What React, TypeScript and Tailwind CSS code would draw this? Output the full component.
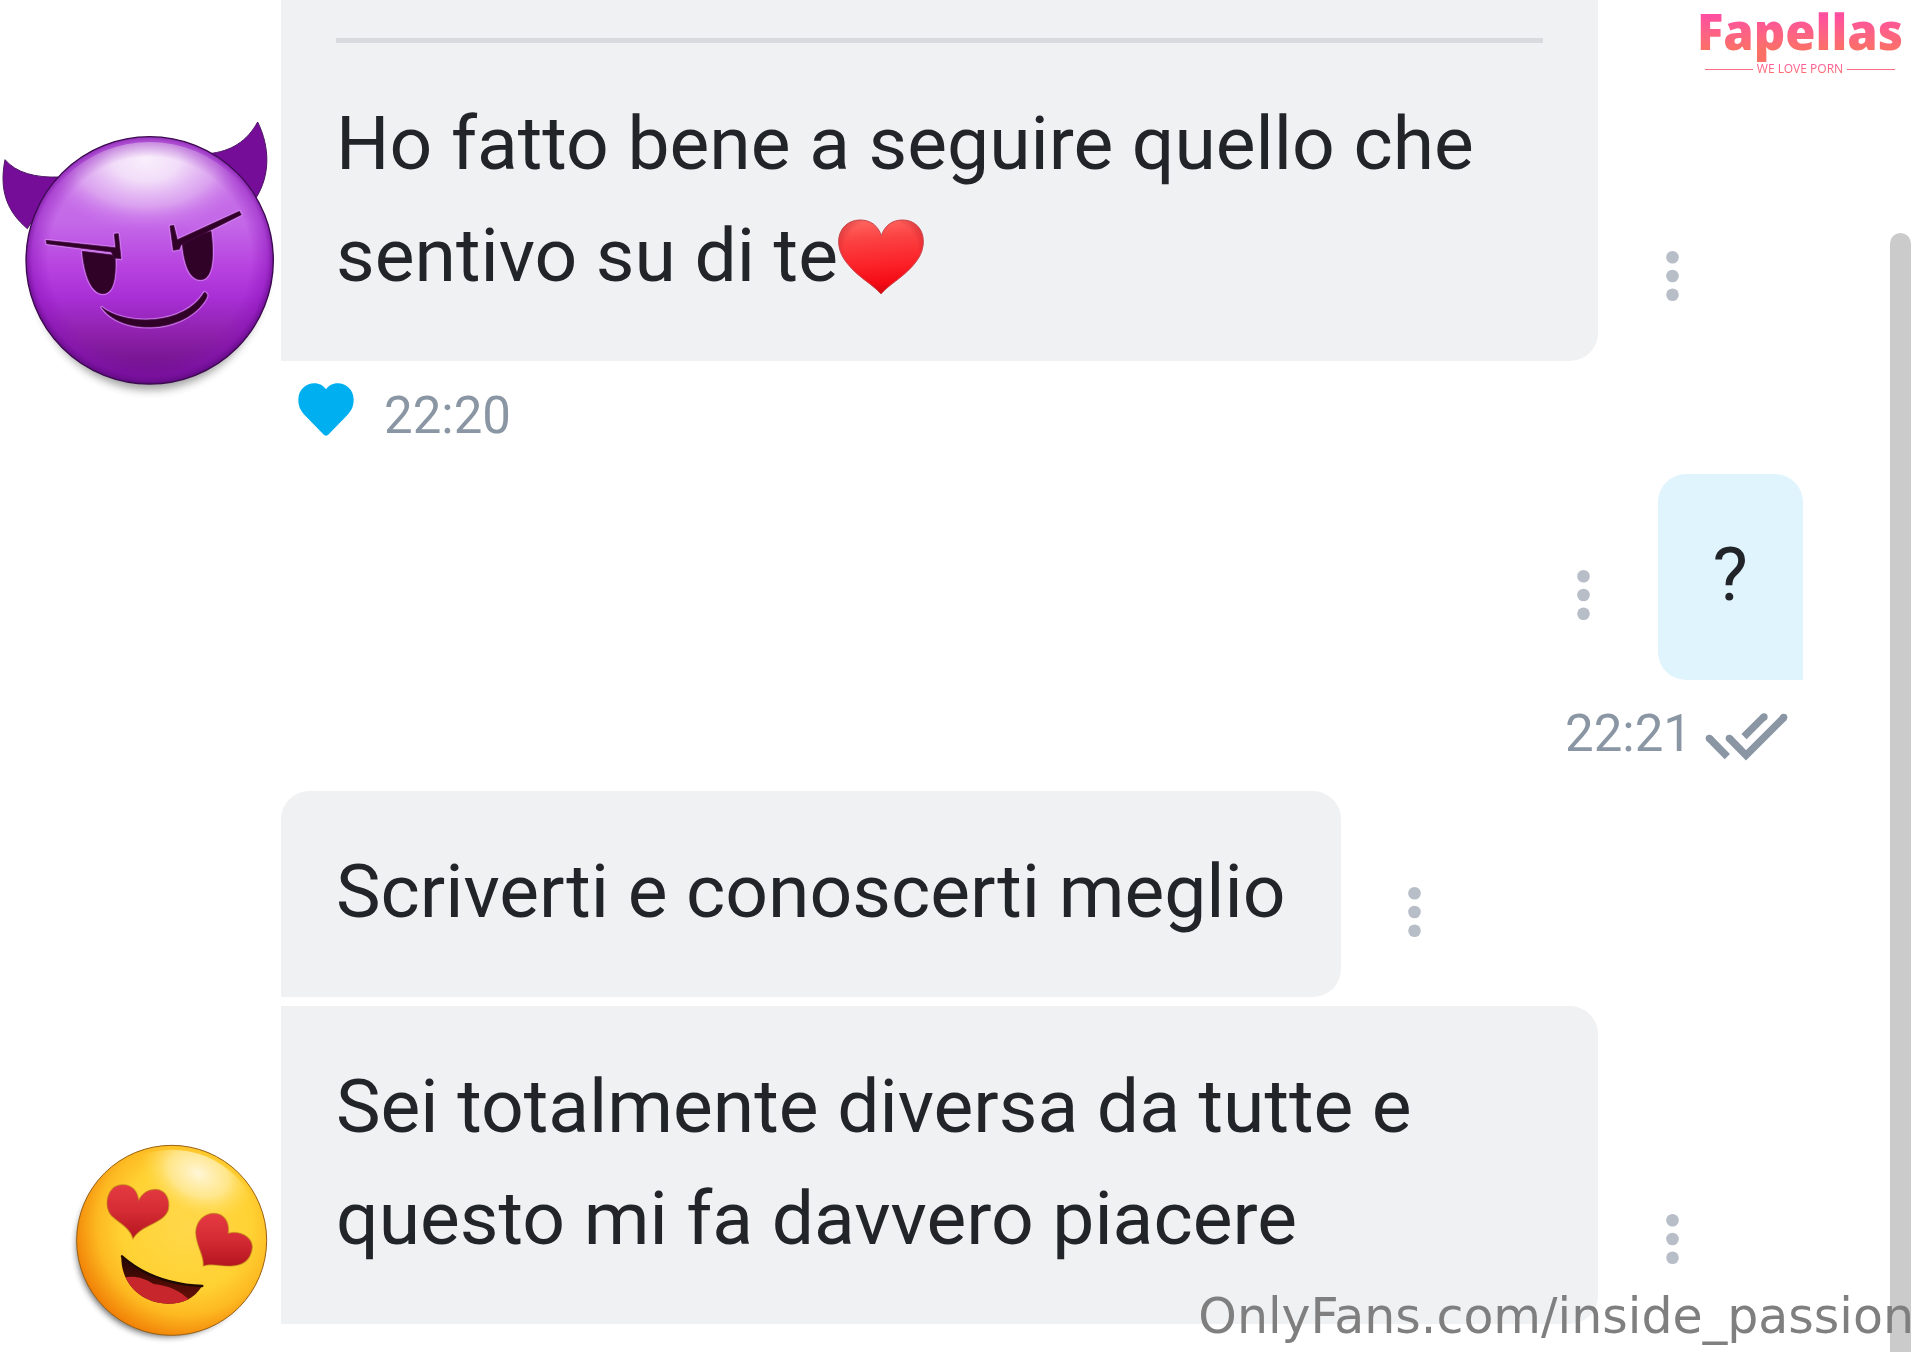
import type { ReactNode } from "react";

function MoreButton() {
  return (
    <button
      type="button"
      aria-label="Altro"
      className="mb-[53px] flex h-16 w-12 shrink-0 items-center justify-center self-end"
    >
      <svg className="h-[50px] w-[13px]" viewBox="0 0 13 50" fill="#b8bec8">
        <circle cx="6.5" cy="6.3" r="6.3" />
        <circle cx="6.5" cy="25" r="6.3" />
        <circle cx="6.5" cy="43.7" r="6.3" />
      </svg>
    </button>
  );
}

function Bubble({ className, children }: { className: string; children: ReactNode }) {
  return (
    <div
      className={`px-[55px] pt-11 pb-[50px] text-[75px] leading-[112px] text-[#212529] ${className}`}
    >
      {children}
    </div>
  );
}

function RedHeart() {
  return (
    <svg
      className="inline-block h-[76px] w-[86px] align-[-14px]"
      viewBox="0 0 258 228"
      role="img"
      aria-label="cuore"
    >
      <defs>
        <linearGradient id="redHeart" x1="0" y1="0" x2="0.1" y2="1">
          <stop offset="0" stopColor="#ff6a63" />
          <stop offset="0.3" stopColor="#fb4142" />
          <stop offset="0.65" stopColor="#fb2228" />
          <stop offset="1" stopColor="#f2000a" />
        </linearGradient>
        <radialGradient id="redHeartEdge" cx="0.5" cy="0.42" r="0.62">
          <stop offset="0.7" stopColor="#b01822" stopOpacity="0" />
          <stop offset="1" stopColor="#b01822" stopOpacity="0.6" />
        </radialGradient>
      </defs>
      <path
        d="M129 225C104 196 66 178 36 143C14 119 2 95 2 68C2 29 30 3 66 3C98 3 120 20 130 50C140 20 162 3 194 3C230 3 256 29 256 67C256 97 243 120 221 144C190 178 153 197 129 225Z"
        fill="url(#redHeart)"
      />
      <path
        d="M129 225C104 196 66 178 36 143C14 119 2 95 2 68C2 29 30 3 66 3C98 3 120 20 130 50C140 20 162 3 194 3C230 3 256 29 256 67C256 97 243 120 221 144C190 178 153 197 129 225Z"
        fill="url(#redHeartEdge)"
        stroke="#c9474b"
        strokeWidth="3"
      />
    </svg>
  );
}

function DevilSticker() {
  return (
    <svg className="h-[290px] w-full" viewBox="0 0 843 870" role="img" aria-label="diavoletto">
      <defs>
        <linearGradient id="devilFace" x1="0" y1="0" x2="0" y2="1">
          <stop offset="0" stopColor="#c678e4" />
          <stop offset="0.35" stopColor="#c468e8" />
          <stop offset="0.52" stopColor="#b844e0" />
          <stop offset="0.65" stopColor="#a92fd6" />
          <stop offset="0.82" stopColor="#8a1fa6" />
          <stop offset="1" stopColor="#640c80" />
        </linearGradient>
        <radialGradient id="devilEdge" cx="0.5" cy="0.49" r="0.51">
          <stop offset="0.8" stopColor="#8a12b8" stopOpacity="0" />
          <stop offset="0.93" stopColor="#8a12b8" stopOpacity="0.45" />
          <stop offset="1" stopColor="#5f0a80" stopOpacity="0.95" />
        </radialGradient>
        <radialGradient
          id="devilShine"
          gradientUnits="userSpaceOnUse"
          cx="0"
          cy="0"
          r="1"
          gradientTransform="translate(438 150) scale(330 215)"
        >
          <stop offset="0" stopColor="#f9effc" />
          <stop offset="0.3" stopColor="#f4e2fa" stopOpacity="0.95" />
          <stop offset="0.65" stopColor="#e6bdf4" stopOpacity="0.65" />
          <stop offset="1" stopColor="#cc70ec" stopOpacity="0" />
        </radialGradient>
        <filter id="devilShadow" x="-20%" y="-20%" width="140%" height="140%">
          <feGaussianBlur stdDeviation="12" />
        </filter>
      </defs>
      <ellipse cx="450" cy="478" rx="348" ry="362" fill="#333" opacity="0.45" filter="url(#devilShadow)" />
      <path
        d="M15 149C48 188 105 204 180 201L82 356C20 304-3 239 15 149Z"
        fill="#750d99"
        stroke="#4c1264"
        strokeWidth="3"
      />
      <path
        d="M773 36C741 94 694 124 626 131L768 264C811 195 810 112 773 36Z"
        fill="#750d99"
        stroke="#4c1264"
        strokeWidth="3"
      />
      <circle cx="449" cy="451" r="371" fill="url(#devilFace)" />
      <circle cx="449" cy="455" r="359" fill="url(#devilShine)" />
      <circle cx="449" cy="451" r="371" fill="url(#devilEdge)" />
      <circle cx="449" cy="451" r="371" fill="none" stroke="#3c0a50" strokeWidth="4" />
      <g fill="#310227" stroke="#d98ff2" strokeOpacity="0.7" strokeWidth="9" strokeLinejoin="round">
        <path d="M247 424L345 436C348 482 346 551 309 551C272 551 252 487 247 424Z" />
        <path d="M546 386L633 364C640 411 645 509 602 509C565 509 550 452 546 386Z" />
        <path d="M305 592C376 648 553 649 613 547C626 551 622 562 612 576C544 673 361 674 305 592Z" />
        <path d="M138 391L347 413L343 372L355 371L363 446L343 444L334 426L140 401Z" />
        <path d="M510 348L521 346L532 389L718 304L724 314L543 405L538 418L520 421Z" />
      </g>
      <g fill="#310227" stroke="#4a0a4c" strokeWidth="2">
        <path d="M247 424L345 436C348 482 346 551 309 551C272 551 252 487 247 424Z" />
        <path d="M546 386L633 364C640 411 645 509 602 509C565 509 550 452 546 386Z" />
        <path d="M305 592C376 648 553 649 613 547C626 551 622 562 612 576C544 673 361 674 305 592Z" />
        <path d="M138 391L347 413L343 372L355 371L363 446L343 444L334 426L140 401Z" />
        <path d="M510 348L521 346L532 389L718 304L724 314L543 405L538 418L520 421Z" />
      </g>
    </svg>
  );
}

function LoveSticker() {
  return (
    <svg className="h-[222px] w-full" viewBox="0 0 663 666" role="img" aria-label="innamorato">
      <defs>
        <radialGradient id="loveFace" cx="0.58" cy="0.42" r="0.62">
          <stop offset="0" stopColor="#ffd84a" />
          <stop offset="0.55" stopColor="#ffd233" />
          <stop offset="0.76" stopColor="#fdb921" />
          <stop offset="1" stopColor="#f07c04" />
        </radialGradient>
        <radialGradient
          id="loveShine"
          gradientUnits="userSpaceOnUse"
          cx="0"
          cy="0"
          r="1"
          gradientTransform="translate(415 130) rotate(25) scale(185 130)"
        >
          <stop offset="0" stopColor="#fff6d8" />
          <stop offset="0.5" stopColor="#ffeda8" stopOpacity="0.75" />
          <stop offset="1" stopColor="#ffd740" stopOpacity="0" />
        </radialGradient>
        <linearGradient id="loveEye" x1="0" y1="0" x2="0" y2="1">
          <stop offset="0" stopColor="#e53a42" />
          <stop offset="0.5" stopColor="#d42b34" />
          <stop offset="1" stopColor="#b5151f" />
        </linearGradient>
        <linearGradient id="loveMouth" x1="0" y1="0" x2="0" y2="1">
          <stop offset="0" stopColor="#210502" />
          <stop offset="1" stopColor="#6d1009" />
        </linearGradient>
        <clipPath id="loveMouthClip">
          <path d="M184 376C246 430 326 461 427 467C402 507 367 521 326 521C244 520 181 461 184 376Z" />
        </clipPath>
        <filter id="loveShadow" x="-20%" y="-20%" width="140%" height="140%">
          <feGaussianBlur stdDeviation="9" />
        </filter>
      </defs>
      <circle cx="322" cy="348" r="272" fill="#222" opacity="0.65" filter="url(#loveShadow)" />
      <circle cx="335" cy="331" r="285" fill="url(#loveFace)" stroke="#9a6010" strokeWidth="3" />
      <circle cx="335" cy="331" r="272" fill="url(#loveShine)" />
      <g stroke="#b98516" strokeOpacity="0.5" strokeWidth="4" fill="url(#loveEye)">
        <path d="M219 326C211 294 176 278 156 259C128 230 140 164 188 164C218 164 233 185 236 210C249 188 264 178 286 178C319 179 331 211 325 239C311 282 245 282 219 326Z" />
        <path d="M430 408C433 377 408 347 407 307C409 271 435 250 463 250C492 251 509 275 505 310C536 300 577 319 577 352C573 392 546 407 514 408C485 410 455 398 430 408Z" />
      </g>
      <path
        d="M184 376C246 430 326 461 427 467C402 507 367 521 326 521C244 520 181 461 184 376Z"
        fill="url(#loveMouth)"
      />
      <g clipPath="url(#loveMouthClip)">
        <path
          d="M192 442C222 436 256 444 281 462C326 467 362 482 390 512L350 540L230 520Z"
          fill="#c6262c"
        />
      </g>
      <path
        d="M186 379C246 432 326 464 427 468"
        fill="none"
        stroke="#1d0a02"
        strokeWidth="7"
        strokeLinecap="round"
      />
    </svg>
  );
}

function Logo() {
  return (
    <a
      href="#"
      className="absolute top-0 right-4 flex w-[208px] flex-col items-center font-['Noto_Sans',sans-serif]"
    >
      <span className="bg-linear-to-b from-[#ff4fa0] from-25% to-[#fb7066] to-80% bg-clip-text text-[49px] leading-[62px] font-black text-transparent">
        Fapellas
      </span>
      <span className="mt-0.5 flex w-[190px] items-center gap-1">
        <span className="h-px flex-1 bg-[#ff6a86]" />
        <span className="bg-linear-to-b from-[#ff5a9c] to-[#fb7066] bg-clip-text text-[12px] leading-[10px] whitespace-nowrap text-transparent">
          WE LOVE PORN
        </span>
        <span className="h-px flex-1 bg-[#ff6a86]" />
      </span>
    </a>
  );
}

export default function App() {
  return (
    <div className="relative flex min-h-screen overflow-hidden bg-white font-[Roboto,sans-serif]">
      <main className="min-w-0 flex-1">
        <section className="flex">
          <div className="w-[281px] shrink-0 pt-[110px]">
            <DevilSticker />
          </div>
          <div className="min-w-0 flex-1">
            <div className="flex gap-[50px]">
              <div className="w-full max-w-[1317px] rounded-br-[28px] bg-[#f0f1f3] pt-[38px]">
                <hr className="mx-[55px] border-t-[5px] border-[#d8dadd]" />
                <Bubble className="">
                  Ho fatto bene a seguire quello che sentivo su di te
                  <RedHeart />
                </Bubble>
              </div>
              <MoreButton />
            </div>
            <div className="flex h-[113px] items-center pb-1 pl-[17px]">
              <button type="button" aria-label="Mi piace" className="mr-[30px] pb-3">
                <svg className="h-[53px] w-14" viewBox="0 0 168 159" fill="#00aff0">
                  <path d="M84 158C80 158 77 155 73 151L22 98C8 83 1 70 1 50C1 22 22 1 49 1C64 1 76 8 84 19C92 8 104 1 119 1C146 1 167 22 167 50C167 70 160 83 146 98L95 151C91 155 88 158 84 158Z" />
                </svg>
              </button>
              <time className="text-[51px] leading-none text-[#8a96a3]">22:20</time>
            </div>
          </div>
        </section>

        <section className="mr-[87px]">
          <div className="flex justify-end gap-[50px]">
            <MoreButton />
            <Bubble className="rounded-t-[28px] rounded-bl-[28px] bg-[#e0f4fd]">?</Bubble>
          </div>
          <div className="flex h-[111px] items-center justify-end gap-3 pr-3.5 pb-1">
            <time className="text-[51px] leading-none text-[#8a96a3]">22:21</time>
            <svg
              className="h-[55px] w-[85px]"
              viewBox="0 -24 255 165"
              fill="none"
              stroke="#8a96a3"
              strokeWidth="22"
            >
              <path d="M17 74L70 128M77 74L126 124L240 10M120 68L179 9" />
              <g fill="#8a96a3" stroke="none">
                <circle cx="16" cy="73" r="11" />
                <circle cx="76" cy="73" r="11" />
                <circle cx="180" cy="9" r="11" />
                <circle cx="239" cy="10" r="11" />
              </g>
            </svg>
          </div>
        </section>

        <section className="mb-[9px] flex gap-[50px] pl-[281px]">
          <Bubble className="rounded-t-[28px] rounded-br-[28px] bg-[#f0f1f3]">
            Scriverti e conoscerti meglio
          </Bubble>
          <MoreButton />
        </section>

        <section className="flex items-start">
          <div className="w-[281px] shrink-0 pt-[124px] pl-[60px]">
            <LoveSticker />
          </div>
          <div className="flex min-w-0 flex-1 gap-[50px]">
            <Bubble className="w-full max-w-[1317px] rounded-r-[28px] bg-[#f0f1f3]">
              Sei totalmente diversa da tutte e questo mi fa davvero piacere
            </Bubble>
            <MoreButton />
          </div>
        </section>
      </main>

      <div className="mt-[233px] mr-[9px] w-[21px] shrink-0 rounded-t-full bg-[#cbcbcb]" />

      <Logo />
      <p className="absolute right-1.5 bottom-0 font-['DejaVu_Sans',sans-serif] text-[49px] leading-[70px] text-[#7f7f7f]">
        OnlyFans.com/inside_passion
      </p>
    </div>
  );
}
